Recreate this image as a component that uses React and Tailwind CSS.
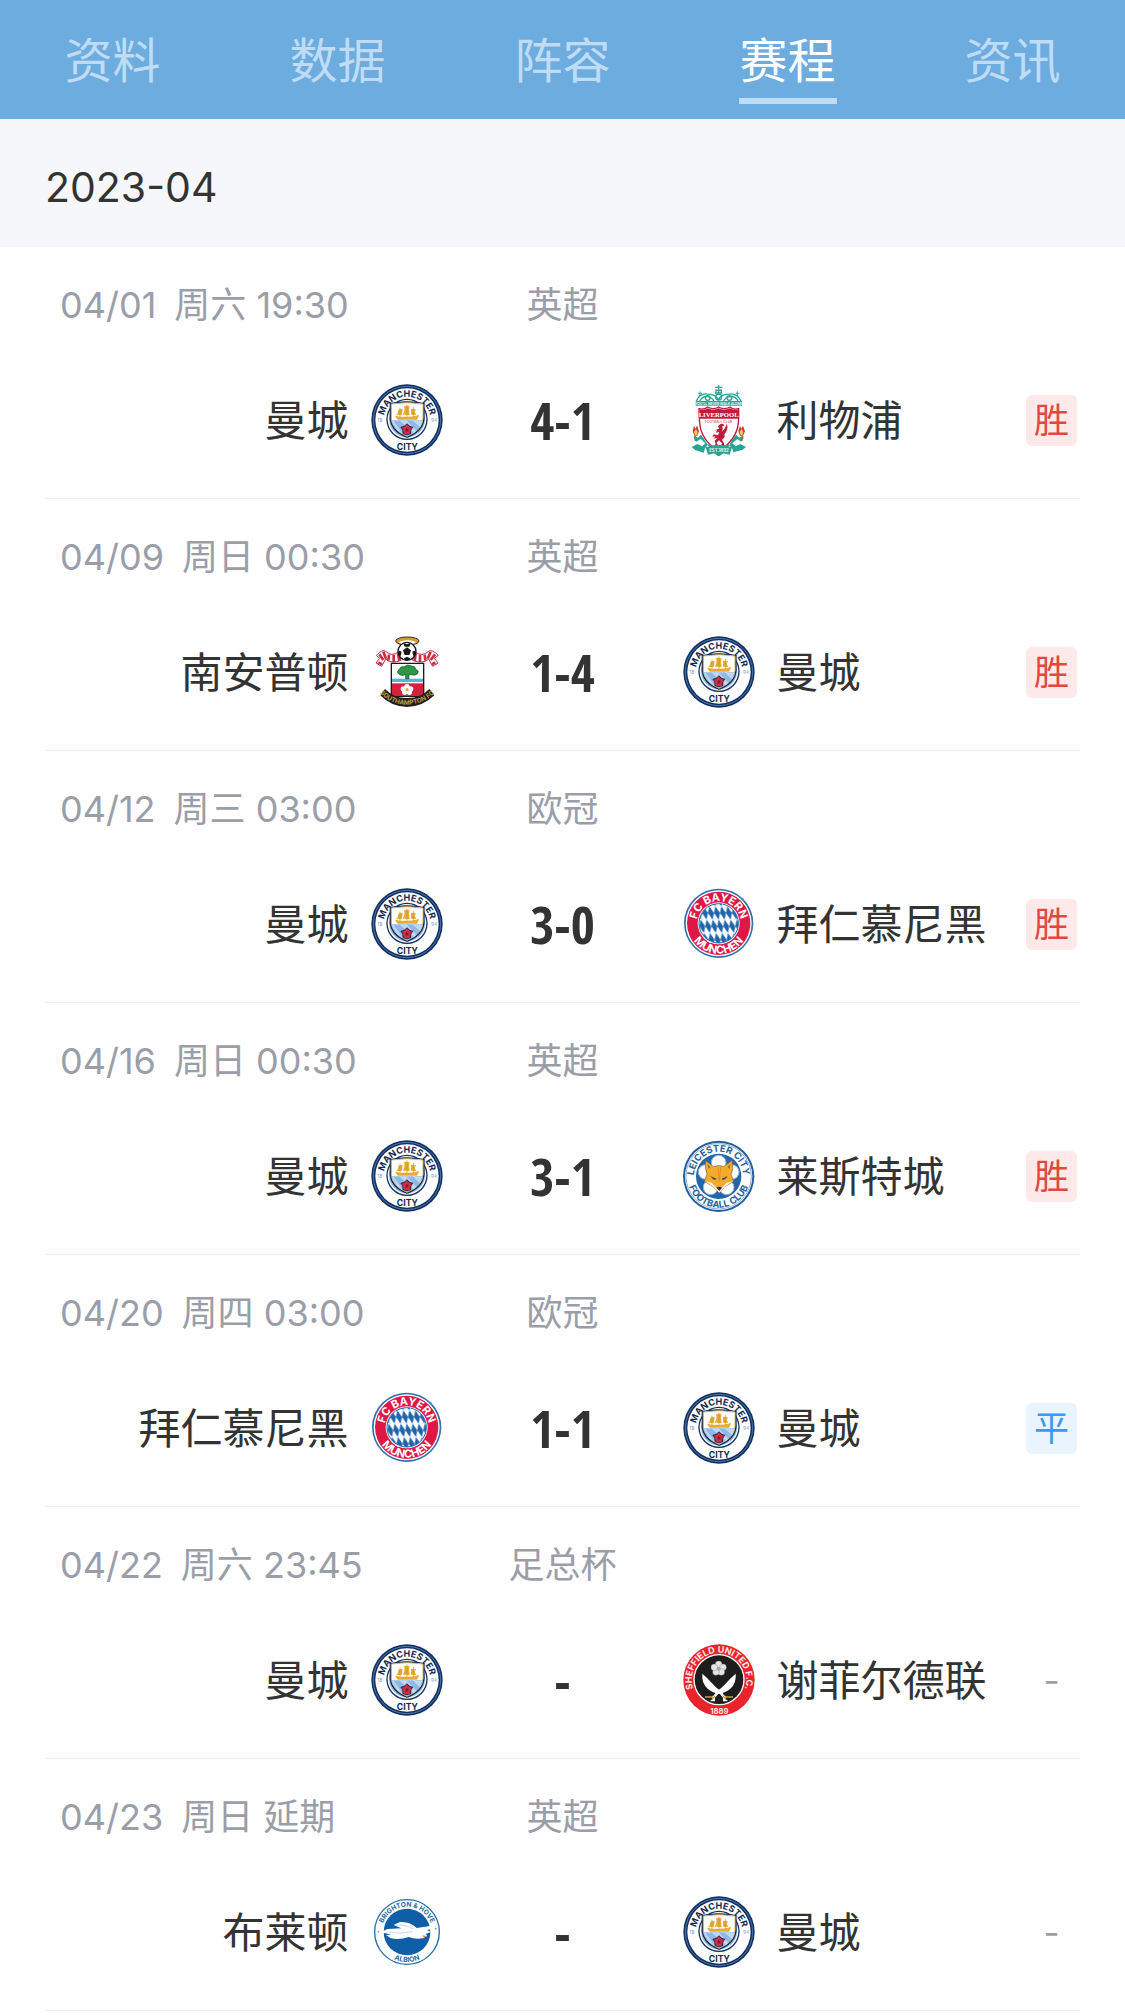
import { useId } from "react";

// Text set on a circle, centred on its top or its bottom
function CurvedText({ cx, cy, r, bottom, size, fill, children }) {
  const id = useId();
  const d = bottom
    ? `M${cx} ${cy - r} A${r} ${r} 0 0 0 ${cx} ${cy + r} A${r} ${r} 0 0 0 ${cx} ${cy - r}`
    : `M${cx} ${cy + r} A${r} ${r} 0 0 1 ${cx} ${cy - r} A${r} ${r} 0 0 1 ${cx} ${cy + r}`;

  return (
    <>
      <path id={id} d={d} fill="none" />
      <text fontSize={size} fill={fill} fontWeight="700" textAnchor="middle">
        <textPath href={`#${id}`} startOffset="50%">
          {children}
        </textPath>
      </text>
    </>
  );
}

function ManCityCrest() {
  return (
    <svg viewBox="33 29 216 216" className="size-[72px] shrink-0" aria-hidden="true">
      <circle cx="141" cy="137" r="107" fill="#0f2f63" />
      <circle cx="141" cy="137" r="101" fill="none" stroke="#6f9bcb" strokeWidth="2" />
      <circle cx="141" cy="137" r="95" fill="#fff" />
      <CurvedText cx={141} cy={137} r={70} size={27} fill="#13294f">
        MANCHESTER
      </CurvedText>
      <circle cx="141" cy="135" r="62" fill="#12305f" />
      <circle cx="141" cy="135" r="58" fill="#fff" />
      <circle cx="141" cy="135" r="54" fill="#8fbce6" />
      <path d="M89 86 Q141 76 194 86 V132 Q192 172 141 191 Q91 172 89 132 Z" fill="#1d2c4c" />
      <path d="M94 89 Q141 81 189 89 V132 Q187 167 141 186 Q96 167 94 132 Z" fill="#fff" stroke="#d9b45c" strokeWidth="3" />
      <path d="M95 138 H188 Q185 168 141 185 Q98 168 95 138 Z" fill="#8fb9e3" />
      <path d="M95 140 L112 168 L128 179 L100 138 Z M118 138 L160 177 L170 170 L139 138 Z M157 138 L180 159 L187 140 Z" fill="#bfd9f0" />
      <g fill="#e8ac35">
        <path d="M105 124 Q141 132 178 122 L171 136 H113 Z" />
        <path d="M115 106 L128 103 L126 121 L108 123 Q116 115 115 106 Z" />
        <path d="M132 94 L149 96 Q145 107 149 122 L129 121 Q136 106 132 94 Z" />
        <path d="M153 103 L168 105 L164 112 L169 122 L153 121 Z" />
      </g>
      <path d="M141 90 V127 M120 100 V127 M160 98 V127" stroke="#c58c25" strokeWidth="2" />
      <path d="M141 147 L149 154 L160 158 L154 167 L153 179 L141 183 L128 179 L127 167 L121 158 L133 154 Z" fill="#252b58" />
      <path d="M140 150 L148 157 L156 160 L151 168 L150 178 L141 180 L131 178 L130 168 L125 160 L134 157 Z" fill="#d62c43" />
      <circle cx="141" cy="167" r="5" fill="#7b1f3d" />
      <text x="142" y="226" fontSize="26" fontWeight="700" fill="#13294f" textAnchor="middle">
        CITY
      </text>
      <text x="60" y="142" fontSize="14" fill="#7599bf" textAnchor="middle">
        18
      </text>
      <text x="222" y="142" fontSize="14" fill="#7599bf" textAnchor="middle">
        94
      </text>
    </svg>
  );
}

function LiverpoolCrest() {
  return (
    <svg viewBox="40 29 216 216" className="size-[72px] shrink-0" aria-hidden="true">
      <g fill="none" stroke="#27a592" strokeWidth="4">
        <path d="M80 80 Q90 57 112 59 Q138 59 146 76 Q154 59 180 59 Q202 57 214 80" />
        <path d="M90 80 Q100 64 114 67 Q128 70 132 80 M162 80 Q166 70 180 67 Q196 64 205 80" />
        <circle cx="114" cy="71" r="7" />
        <circle cx="179" cy="71" r="7" />
        <circle cx="147" cy="68" r="9" />
        <path d="M136 39 H158 M138 48 H156 M147 33 V58 M136 56 H158 M139 45 V58 M155 45 V58" />
        <path d="M91 51 V65 M86 57 H97 M203 51 V65 M198 57 H209" strokeWidth="3" />
      </g>
      <rect x="78" y="80" width="139" height="14" fill="#27a592" />
      <text x="147" y="91" fontSize="10" fontWeight="700" fill="#e4f5f1" textAnchor="middle">
        YOU&apos;LL NEVER WALK ALONE
      </text>
      <path d="M88 103 Q104 107 114 98 Q132 108 147 98 Q163 108 181 98 Q190 107 207 103 Q208 123 206 145 Q202 195 147 232 Q93 195 90 145 Q88 123 88 103 Z" fill="#fff" stroke="#ba1838" strokeWidth="4" />
      <path d="M90 106 Q106 108 115 102 Q131 110 147 102 Q163 110 180 102 Q190 108 205 106 V133 H90 Z" fill="#c31b3d" />
      <text x="147" y="129" fontSize="20" fontWeight="700" fill="#fff" textAnchor="middle" className="font-[Liberation_Serif]">
        LIVERPOOL
      </text>
      <text x="147" y="145" fontSize="10" fill="#c31b3d" textAnchor="middle">
        FOOTBALL CLUB
      </text>
      <path d="M149 151 Q160 145 164 153 L157 157 Q162 165 155 173 Q167 164 172 148 Q177 165 164 180 Q168 190 157 196 L163 207 V215 L151 213 L158 208 L148 198 L141 205 L146 215 L133 214 L138 209 L135 199 L144 190 L133 193 L137 186 L128 187 L132 180 L145 183 L149 172 L139 176 L142 168 L134 168 L149 163 L145 156 Z" fill="#bf1b3b" />
      <g fill="#27a592">
        <path d="M73 184 Q70 195 80 202 L93 194 L107 207 L97 216 L83 209 L66 218 L76 227 L102 235 L106 222 L116 210 Q145 222 177 210 L188 223 L191 234 L219 226 L229 218 L212 209 L198 216 L188 207 L203 194 L214 202 Q224 194 221 184 L209 190 L199 181 L189 195 L177 216 Q147 229 117 216 L103 193 L94 181 L85 190 Z" />
        <path d="M108 219 Q147 205 187 219 L180 241 Q147 231 115 241 Z" />
        <path d="M132 235 L147 247 L163 235 Z" />
      </g>
      <text x="148" y="232" fontSize="13" fontWeight="700" fill="#e9f7f5" textAnchor="middle">
        EST.1892
      </text>
      <path d="M74 184 L69 170 L73 155 L78 163 L82 153 L88 171 L83 184 Z M211 184 L206 170 L211 155 L215 163 L220 154 L226 171 L220 184 Z" fill="#c83934" />
      <path d="M76 183 L73 172 L79 164 L84 173 L81 183 Z M213 183 L210 172 L216 164 L221 173 L218 183 Z" fill="#f1d052" />
      <path d="M77 184 V199 M217 184 V199" stroke="#c76732" strokeWidth="4" />
    </svg>
  );
}

function SouthamptonCrest() {
  return (
    <svg viewBox="33 29 216 216" className="size-[72px] shrink-0" aria-hidden="true">
      <ellipse cx="142" cy="44" rx="35" ry="12" fill="#d99b38" stroke="#33261c" strokeWidth="3" />
      <ellipse cx="142" cy="48" rx="25" ry="6" fill="#fff" />
      <g fill="#fff" stroke="#bd2f43" strokeWidth="3">
        <path d="M49 87 Q68 67 77 75 Q96 93 116 76 L123 102 Q94 114 77 98 L65 120 L48 110 L59 96 Z" />
        <path d="M235 87 Q215 67 206 75 Q187 93 164 76 L158 102 Q189 114 206 98 L218 120 L234 110 L223 96 Z" />
      </g>
      <path d="M58 84 L70 101 M70 76 L78 97 M87 85 L85 103 M101 85 L101 107 M114 81 L118 104 M55 108 L66 114 M225 84 L212 101 M212 76 L203 97 M194 85 L196 103 M180 85 L180 107 M167 81 L164 104 M226 108 L216 114" stroke="#cb2c45" strokeWidth="8" />
      <circle cx="141" cy="75" r="27" fill="#fff" stroke="#171717" strokeWidth="4" />
      <path d="M141 63 L153 72 L148 86 H134 L129 72 Z M129 49 L141 54 L153 49 L148 61 H134 Z M115 72 L125 76 L122 89 L117 86 Z M167 72 L157 76 L160 89 L165 86 Z M132 96 L141 91 L151 96 L147 102 H135 Z" fill="#171717" />
      <path d="M94 111 H191 V210 H94 Z" fill="#fff" stroke="#1b1b1b" strokeWidth="4" />
      <path d="M96 157 H189 V167 H96 Z" fill="#54b6dc" />
      <path d="M96 171 H189 V209 H96 Z" fill="#d81f3c" />
      <path d="M117 144 Q107 136 118 129 Q121 119 133 121 Q142 112 155 119 Q166 119 167 129 Q179 133 173 142 Q168 149 151 145 L147 145 V157 H137 V145 Q124 150 117 144 Z" fill="#2b9846" stroke="#194c28" strokeWidth="2" />
      <g fill="#fff">
        <circle cx="141" cy="181" r="8" />
        <circle cx="152" cy="188" r="8" />
        <circle cx="148" cy="198" r="8" />
        <circle cx="134" cy="198" r="8" />
        <circle cx="130" cy="188" r="8" />
      </g>
      <circle cx="141" cy="190" r="5" fill="#dcae39" />
      <path d="M75 188 Q103 216 141 215 Q181 216 208 188 L223 207 Q189 241 141 242 Q93 241 61 207 Z" fill="#231f20" />
      <CurvedText cx={141} cy={122} r={113} bottom size={19} fill="#c79b45">
        SOUTHAMPTON FC
      </CurvedText>
    </svg>
  );
}

function BayernCrest() {
  return (
    <svg viewBox="40 29 216 216" className="size-[72px] shrink-0" aria-hidden="true">
      <defs>
        <pattern id="bavaria" width="18" height="40" patternUnits="userSpaceOnUse" patternTransform="translate(0 4) skewX(14)">
          <rect width="18" height="40" fill="#fff" />
          <path d="M9 0 L18 20 L9 40 L0 20 Z" fill="#1e65ae" />
        </pattern>
      </defs>
      <circle cx="147" cy="135" r="104" fill="#3070ae" />
      <circle cx="147" cy="135" r="99" fill="#fff" />
      <circle cx="147" cy="135" r="95" fill="#df1747" />
      <circle cx="147" cy="135" r="63" fill="#fff" />
      <circle cx="147" cy="135" r="59" fill="url(#bavaria)" stroke="#1e65ae" strokeWidth="3" />
      <CurvedText cx={147} cy={135} r={67} size={33} fill="#fff">
        FC BAYERN
      </CurvedText>
      <CurvedText cx={147} cy={135} r={91} bottom size={33} fill="#fff">
        MÜNCHEN
      </CurvedText>
    </svg>
  );
}

function LeicesterCrest() {
  return (
    <svg viewBox="40 29 216 216" className="size-[72px] shrink-0" aria-hidden="true">
      <circle cx="147" cy="138" r="107" fill="#215d9f" />
      <circle cx="147" cy="138" r="101" fill="#fff" />
      <circle cx="147" cy="138" r="98" fill="none" stroke="#5f8bb8" strokeWidth="2" />
      <circle cx="147" cy="138" r="68" fill="#2267aa" />
      <g fill="#fff" stroke="#8fb5d8" strokeWidth="3">
        <circle cx="147" cy="97" r="22" />
        <circle cx="186" cy="125" r="22" />
        <circle cx="171" cy="171" r="22" />
        <circle cx="123" cy="171" r="22" />
        <circle cx="108" cy="125" r="22" />
      </g>
      <path d="M108 91 L132 109 Q148 102 162 109 L187 90 Q192 119 184 132 L192 153 L167 168 L149 188 L132 170 L104 153 L112 131 Q104 111 108 91 Z" fill="#f4ab2c" stroke="#7a6238" strokeWidth="2" />
      <path d="M106 153 L126 157 L141 173 H157 L170 157 L190 153 L168 168 L149 187 L131 169 Z" fill="#f5f2e9" />
      <path d="M114 102 L122 110 L116 116 Z M182 101 L174 110 L180 116 Z" fill="#7b7160" />
      <path d="M122 137 L140 145 L137 149 Q127 146 122 137 Z M174 137 L156 145 L159 149 Q170 146 174 137 Z" fill="#344956" />
      <path d="M140 172 Q148 167 157 172 L149 182 Z" fill="#22314e" />
      <path d="M145 112 L149 154 L153 112" fill="none" stroke="#d9851e" strokeWidth="2" />
      <CurvedText cx={147} cy={138} r={74} size={28} fill="#285f9b">
        LEICESTER CITY
      </CurvedText>
      <CurvedText cx={147} cy={138} r={94} bottom size={28} fill="#285f9b">
        FOOTBALL CLUB
      </CurvedText>
    </svg>
  );
}

function SheffieldCrest() {
  return (
    <svg viewBox="40 29 216 216" className="size-[72px] shrink-0" aria-hidden="true">
      <circle cx="148" cy="137" r="107" fill="#e8242c" />
      <circle cx="148" cy="136" r="77" fill="#fff" />
      <circle cx="148" cy="136" r="73" fill="#1e1d1e" />
      <CurvedText cx={148} cy={137} r={82} size={27} fill="#ffe9e9">
        SHEFFIELD UNITED F.C.
      </CurvedText>
      <g fill="#e5e5e5" stroke="#777" strokeWidth="1">
        <circle cx="147" cy="90" r="10" />
        <circle cx="160" cy="99" r="10" />
        <circle cx="155" cy="113" r="10" />
        <circle cx="139" cy="113" r="10" />
        <circle cx="134" cy="99" r="10" />
      </g>
      <circle cx="147" cy="103" r="6" fill="#aaa" />
      <g fill="#fff">
        <path d="M98 118 Q95 146 114 163 Q130 176 150 178 L160 190 L165 185 L155 171 Q140 162 127 147 Q114 131 98 118 Z" />
        <path d="M198 118 Q201 146 182 163 Q166 176 146 178 L136 190 L131 185 L141 171 Q156 162 169 147 Q182 131 198 118 Z" />
        <path d="M128 184 H136 V201 H123 V196 H128 Z M160 184 H168 V196 H173 V201 H160 Z" />
      </g>
      <path d="M106 188 H128 M168 188 H190 M128 194 L137 184 M168 194 L159 184" stroke="#bca732" strokeWidth="4" />
      <text x="149" y="240" fontSize="23" fontWeight="700" fill="#ffe6e6" textAnchor="middle">
        1889
      </text>
    </svg>
  );
}

function BrightonCrest() {
  return (
    <svg viewBox="33 31 216 216" className="size-[72px] shrink-0" aria-hidden="true">
      <circle cx="141" cy="139" r="97" fill="#fff" stroke="#2470aa" strokeWidth="4" />
      <circle cx="141" cy="139" r="70" fill="#0f5fa8" />
      <CurvedText cx={141} cy={139} r={76} size={20} fill="#286b9e">
        BRIGHTON &amp; HOVE
      </CurvedText>
      <CurvedText cx={141} cy={139} r={90} bottom size={21} fill="#286b9e">
        ALBION
      </CurvedText>
      <path d="M68 137 L83 130 L124 128 L101 118 L120 109 Q151 107 170 127 L211 121 L236 126 L201 133 L213 139 L198 144 L201 151 L189 158 Q165 162 146 154 Q117 164 91 157 L78 148 L95 147 L70 141 Z" fill="#fff" />
      <path d="M83 139 Q121 146 157 138 M105 119 Q137 115 159 130" fill="none" stroke="#a9c7df" strokeWidth="2" />
      <path d="M187 149 L200 151 L192 156 Z" fill="#ef7942" />
      <circle cx="55" cy="138" r="3" fill="#d8a16d" />
      <circle cx="227" cy="129" r="3" fill="#78a3c7" />
    </svg>
  );
}

const teams = {
  city: { name: "曼城", Crest: ManCityCrest },
  liverpool: { name: "利物浦", Crest: LiverpoolCrest },
  southampton: { name: "南安普顿", Crest: SouthamptonCrest },
  bayern: { name: "拜仁慕尼黑", Crest: BayernCrest },
  leicester: { name: "莱斯特城", Crest: LeicesterCrest },
  sheffield: { name: "谢菲尔德联", Crest: SheffieldCrest },
  brighton: { name: "布莱顿", Crest: BrightonCrest }
};

const matches = [
  { date: "04/01", time: "周六 19:30", league: "英超", home: "city", away: "liverpool", score: "4-1", result: "胜" },
  { date: "04/09", time: "周日 00:30", league: "英超", home: "southampton", away: "city", score: "1-4", result: "胜" },
  { date: "04/12", time: "周三 03:00", league: "欧冠", home: "city", away: "bayern", score: "3-0", result: "胜" },
  { date: "04/16", time: "周日 00:30", league: "英超", home: "city", away: "leicester", score: "3-1", result: "胜" },
  { date: "04/20", time: "周四 03:00", league: "欧冠", home: "bayern", away: "city", score: "1-1", result: "平" },
  { date: "04/22", time: "周六 23:45", league: "足总杯", home: "city", away: "sheffield", score: "-", result: "-" },
  { date: "04/23", time: "周日 延期", league: "英超", home: "brighton", away: "city", score: "-", result: "-" }
];

const resultStyles = {
  胜: "bg-[#fde9e9] text-[#e2483d]",
  平: "bg-[#e9f4fe] text-[#3b9bee]",
  "-": "text-[#9a9ea8]"
};

const tabs = ["资料", "数据", "阵容", "赛程", "资讯"];

function MatchRow({ match }) {
  const home = teams[match.home];
  const away = teams[match.away];

  return (
    <li className="border-b border-[#ececee] pt-8 pb-[43px]">
      <div className="grid grid-cols-[1fr_240px_1fr] items-center text-[36px] leading-[52px] text-[#9a9ea8]">
        <p className="flex gap-[18px] pl-[15px] whitespace-nowrap">
          <span>{match.date}</span>
          <span>{match.time}</span>
        </p>
        <p className="text-center">{match.league}</p>
      </div>

      <div className="mt-[50px] grid h-[74px] grid-cols-[1fr_240px_1fr] items-center text-[42px] text-[#333]">
        <div className="flex items-center justify-end gap-[22px] whitespace-nowrap">
          <span>{home.name}</span>
          <home.Crest />
        </div>
        <p className="text-center font-['Noto_Sans_ExtraCondensed','Open_Sans_Condensed','Roboto_Condensed',Roboto,sans-serif] text-[52px] font-bold">
          {match.score}
        </p>
        <div className="flex items-center gap-[22px] whitespace-nowrap">
          <away.Crest />
          <span>{away.name}</span>
          <span
            className={`mr-[3px] ml-auto flex size-[51px] items-center justify-center rounded-md text-[35px] ${resultStyles[match.result]}`}
          >
            {match.result}
          </span>
        </div>
      </div>
    </li>
  );
}

function App() {
  return (
    <div className="min-h-screen bg-white font-[Inter,'Noto_Sans_CJK_SC',sans-serif]">
      <nav className="flex h-[119px] bg-[#6cacdf]">
        {tabs.map((tab) => (
          <button
            key={tab}
            type="button"
            className={`flex flex-1 flex-col items-center pt-6 text-[48px] leading-[74px] ${
              tab === "赛程" ? "text-white" : "text-[#c0dcf5]"
            }`}
          >
            {tab}
            {tab === "赛程" && <span className="h-1.5 w-[98px] bg-[#c0dcf5]" />}
          </button>
        ))}
      </nav>

      <h2 className="flex h-32 items-center bg-[#f6f7fa] px-[45px] pt-2.5 text-[41px] text-[#333]">
        2023-04
      </h2>

      <ul className="px-[45px]">
        {matches.map((match) => (
          <MatchRow key={match.date} match={match} />
        ))}
      </ul>
    </div>
  );
}

export default App;
